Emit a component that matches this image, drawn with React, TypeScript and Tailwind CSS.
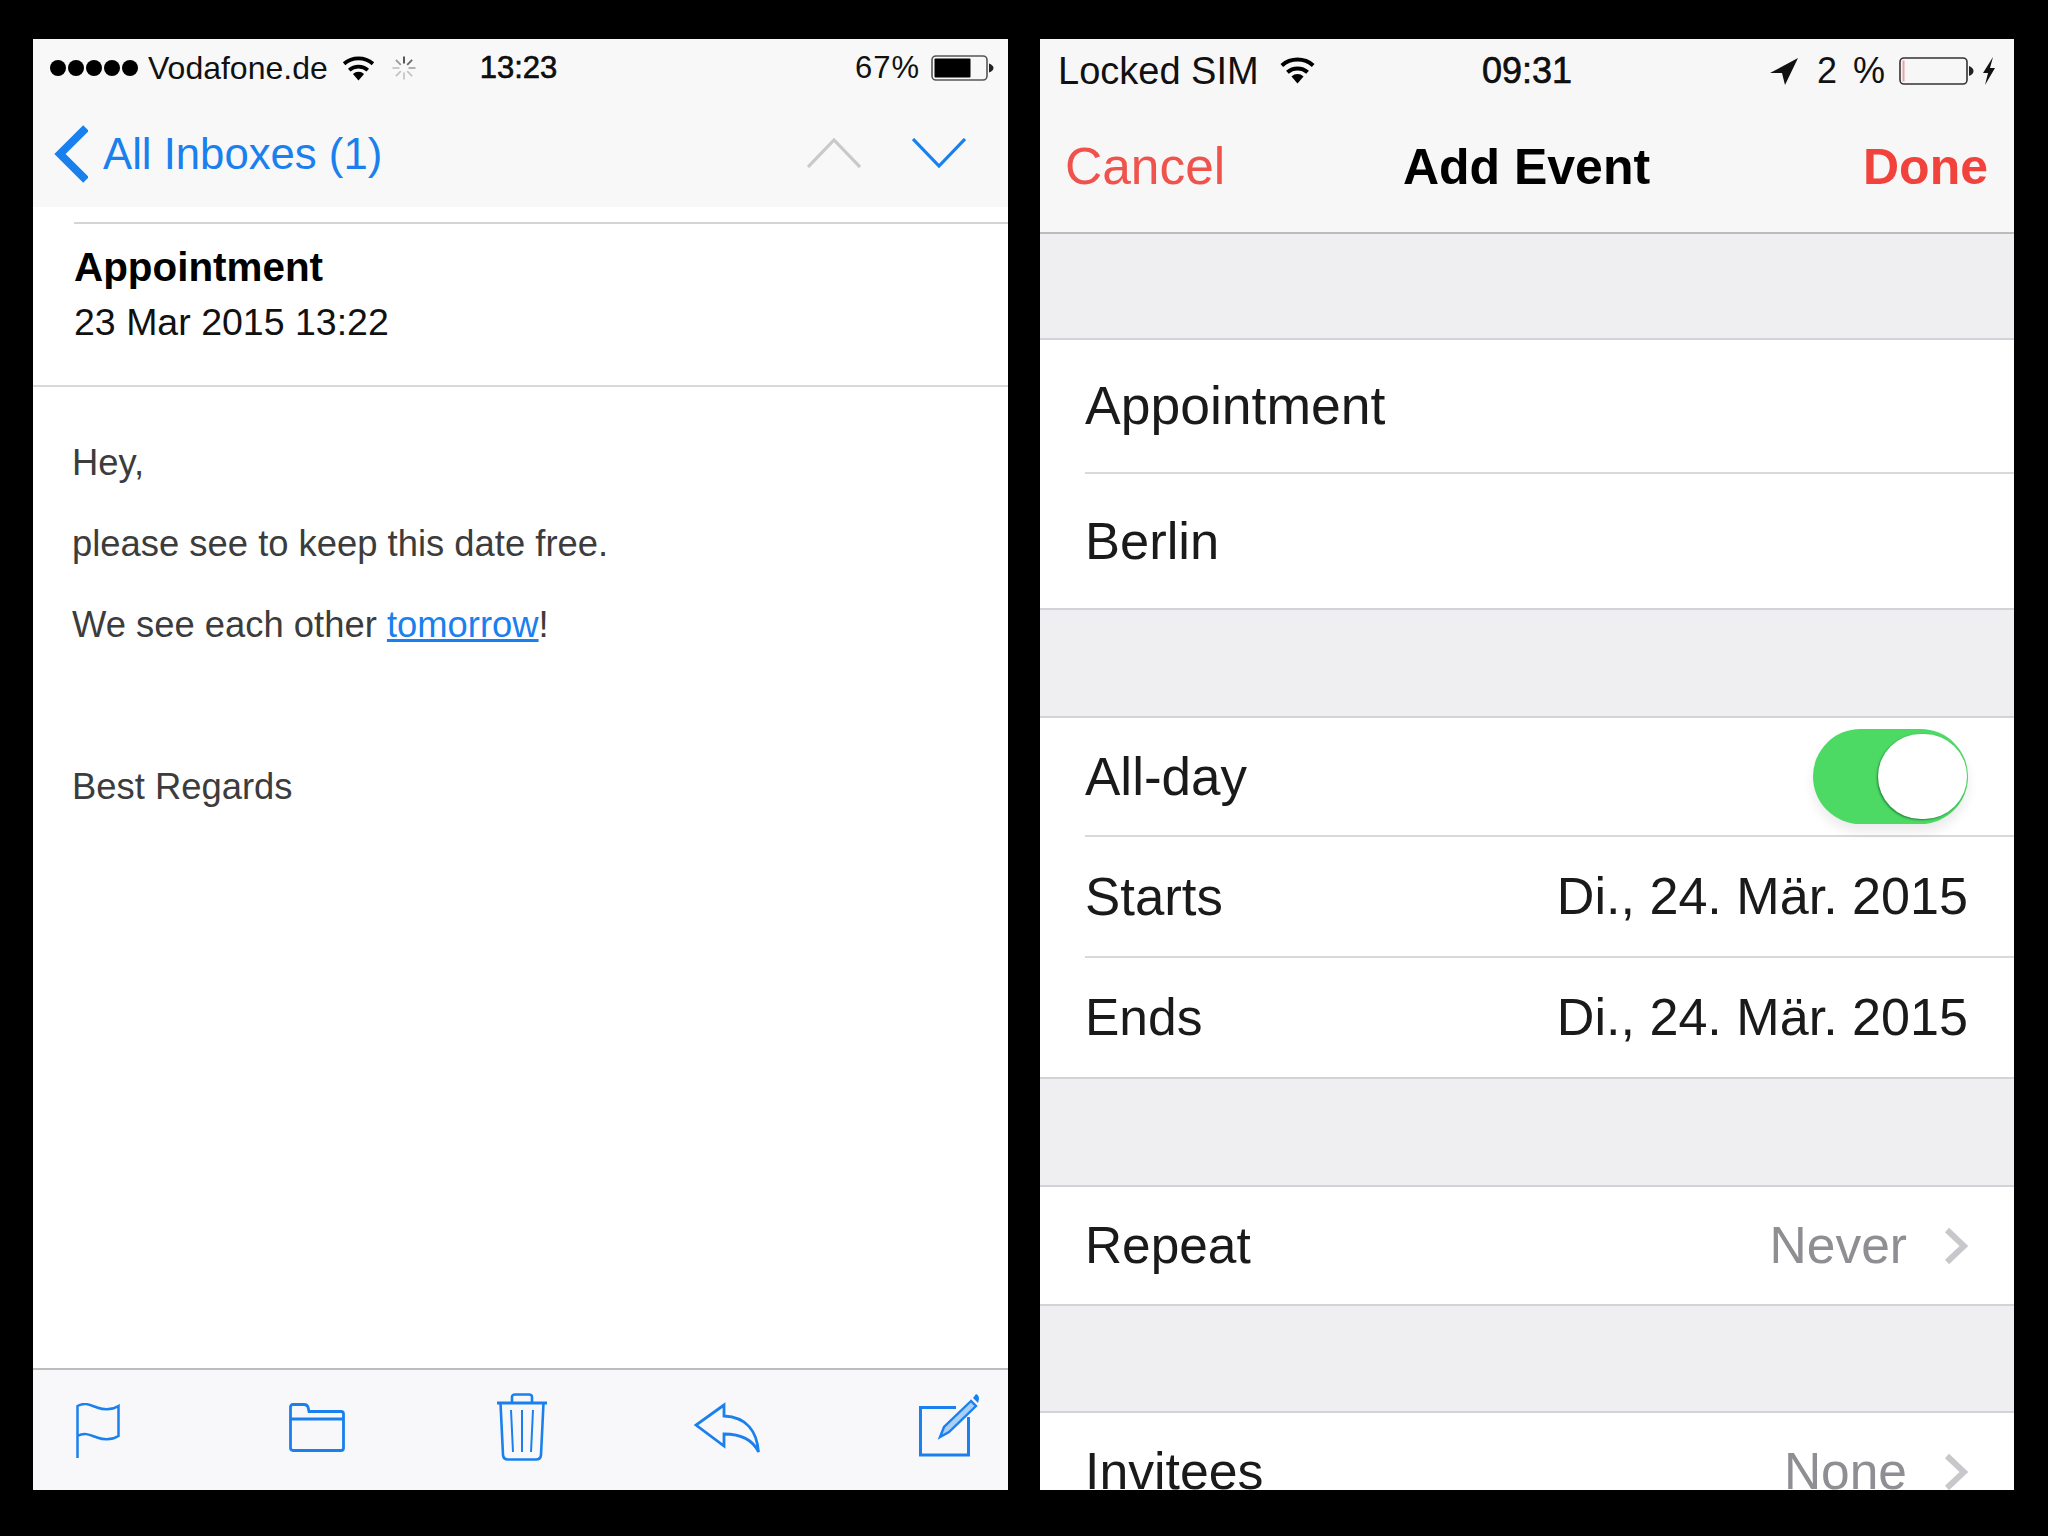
const BLUE = "#1a80ee";

function Wifi({ className }: { className: string }) {
  return (
    <svg viewBox="0 0 32 25" className={className}>
      <path d="M16 24.5 L10.6 18.2 A8.2 8.2 0 0 1 21.4 18.2 Z" fill="#000" />
      <path d="M7 14.6 A13.4 13.4 0 0 1 25 14.6" fill="none" stroke="#000" strokeWidth="3.6" />
      <path d="M2 8.4 A21.4 21.4 0 0 1 30 8.4" fill="none" stroke="#000" strokeWidth="3.6" />
    </svg>
  );
}

function Spinner() {
  const lines = [0, 45, 90, 135, 180, 225, 270, 315];
  const colors = ["#444", "#666", "#aaa", "#c4c4c4", "#c4c4c4", "#c4c4c4", "#c4c4c4", "#999"];
  return (
    <svg viewBox="0 0 26 26" className="w-[26px] h-[26px] ml-[16px]">
      {lines.map((a, i) => (
        <line key={a} x1="13" y1="1.5" x2="13" y2="8.5" stroke={colors[i]} strokeWidth="1.8" transform={`rotate(${a} 13 13)`} />
      ))}
    </svg>
  );
}

function Battery({ level, fill, width }: { level: number; fill: string; width: string }) {
  return (
    <svg viewBox={`0 0 ${level === 2 ? 75 : 63} ${level === 2 ? 28 : 26}`} className={width}>
      {level === 2 ? (
        <>
          <rect x="1" y="1" width="67" height="26" rx="4" fill="none" stroke="#333" strokeWidth="1.6" />
          <rect x="3.5" y="3.5" width="2" height="21" fill={fill} />
          <path d="M70 9 C73 10 74.5 12 74.5 14 C74.5 16 73 18 70 19 Z" fill="#222" />
        </>
      ) : (
        <>
          <rect x="1" y="1" width="55" height="24" rx="4" fill="none" stroke="#555" strokeWidth="1.6" />
          <rect x="3.5" y="3.5" width="36" height="19" rx="1" fill="#000" />
          <path d="M58 8.5 C60.5 9.5 62.5 11 62.5 13 C62.5 15 60.5 16.5 58 17.5 Z" fill="#222" />
        </>
      )}
    </svg>
  );
}

function Flag() {
  return (
    <svg viewBox="0 0 44 56" className="w-[44px] h-[56px] ml-[43px] mt-[2px]" fill="none" stroke={BLUE} strokeWidth="2.5">
      <path d="M1.5 55 V3 C9 -1 14 2 21 4.5 C28 7 36 7 42.5 3 V33 C36 37 28 37 21 34.5 C14 32 9 29 1.5 33" />
    </svg>
  );
}

function Folder() {
  return (
    <svg viewBox="0 0 56 49" className="w-[56px] h-[49px] ml-[169px] -mt-[5px]" fill="none" stroke={BLUE} strokeWidth="2.8">
      <path d="M1.5 4 Q1.5 1.5 4 1.5 H15 Q18 1.5 19 4 L20 8.5 H52 Q54.5 8.5 54.5 11 V45 Q54.5 47.5 52 47.5 H4 Q1.5 47.5 1.5 45 Z" />
      <path d="M1.5 16 H54.5" strokeWidth="3" />
    </svg>
  );
}

function Trash() {
  return (
    <svg viewBox="0 0 50 68" className="w-[50px] h-[68px] ml-[152px] -mt-[6px]" fill="none" stroke={BLUE} strokeWidth="2.6">
      <path d="M0 10 H50" strokeWidth="3" />
      <path d="M15 10 V4 Q15 1.5 18 1.5 H32 Q35 1.5 35 4 V10" />
      <path d="M3.5 10 L6 62 Q6.5 66.5 11 66.5 H39 Q43.5 66.5 44 62 L46.5 10" />
      <path d="M14 17 L16 59 M25 17 V59 M36 17 L34 59" strokeWidth="2" />
    </svg>
  );
}

function Reply() {
  return (
    <svg viewBox="0 0 66 52" className="w-[66px] h-[52px] ml-[147px] -mt-[4px]" fill="none" stroke={BLUE} strokeWidth="2.8">
      <path d="M30 3 L2 23 L30 44 V32 C44 32 58 36 64.5 50 C63 30 53 15 30 14 Z" strokeLinejoin="miter" />
    </svg>
  );
}

function Compose() {
  return (
    <svg viewBox="0 0 60 63" className="w-[60px] h-[63px] ml-[159px] -mt-[10px]" fill="none" stroke={BLUE} strokeWidth="3">
      <path d="M37 13.5 H1.5 V61 H49.5 V23" />
      <path d="M52 7 L25 33 L21 43 L30 38 L57 12 Z" fill={BLUE} fillOpacity="0.35" strokeWidth="2.4" />
      <path d="M54 4 L57 0 Q60 1 60 5 L59 9 Z" fill={BLUE} stroke="none" />
    </svg>
  );
}

function Gray({ h }: { h: string }) {
  return <div className={`${h} bg-[#efeef1]`} />;
}

function Group({ children }: { children: React.ReactNode }) {
  return <div className="bg-white border-y-2 border-[#d3d2d6]">{children}</div>;
}

function Row({ label, labelClass, value, h, divider, chevron, right }: { label: string; labelClass: string; value?: string; h: string; divider?: boolean; chevron?: boolean; right?: React.ReactNode }) {
  return (
    <div className="pl-[45px]">
      <div className={`${h} flex items-center pr-[46px] text-[#1a1a1a] ${divider ? "border-b-2 border-[#d9d8dc]" : ""}`}>
        <span className={labelClass}>{label}</span>
        <span className="flex-1" />
        {value && <span className={chevron ? "text-[51.5px] text-[#8e8e93]" : "text-[52.1px] text-[#1a1a1a]"}>{value}</span>}
        {chevron && (
          <svg viewBox="0 0 24 38" className="w-[24px] h-[38px] ml-[37px]" fill="none" stroke="#c7c7cc" strokeWidth="6">
            <path d="M3 3 L20 19 L3 35" />
          </svg>
        )}
        {right}
      </div>
    </div>
  );
}

export default function App() {
  return (
    <div className="w-[2048px] h-[1536px] bg-black flex pt-[39px] pl-[33px] font-['Liberation_Sans',Arial,sans-serif]">
      {/* Mail */}
      <div className="w-[975px] h-[1451px] bg-white flex flex-col overflow-hidden">
        <div className="bg-[#f8f8f8] h-[168px] shrink-0">
          <div className="h-[56px] pt-[1px] pl-[17px] pr-[14px] grid grid-cols-[1fr_auto_1fr] items-center text-[#111]">
            <div className="flex items-center">
              <div className="flex gap-[2px]">
                {[0, 1, 2, 3, 4].map((i) => (
                  <div key={i} className="w-[16px] h-[16px] rounded-full bg-black" />
                ))}
              </div>
              <span className="text-[32px] leading-none ml-[10px]">Vodafone.de</span>
              <Wifi className="w-[33px] h-[26px] ml-[14px]" />
              <Spinner />
            </div>
            <div className="text-[31px] leading-none [-webkit-text-stroke:0.6px_#000] -ml-[7px]">13:23</div>
            <div className="flex items-center justify-end">
              <span className="text-[31px] leading-none tracking-[1px]">67%</span>
              <Battery level={67} fill="#000" width="w-[63px] h-[26px] ml-[11px]" />
            </div>
          </div>
          <div className="h-[112px] pt-[6px] flex items-center pl-[21px] pr-[42px]">
            <svg viewBox="0 0 34 58" className="w-[34px] h-[58px]" fill="none" stroke={BLUE} strokeWidth="8">
              <path d="M32 3 L6 29 L32 55" />
            </svg>
            <span className="text-[43.7px] leading-none ml-[15px] text-[#1a80ee]">All Inboxes (1)</span>
            <span className="flex-1" />
            <svg viewBox="0 0 54 30" className="w-[54px] h-[30px] -mt-[3px]" fill="none" stroke="#c9c9c9" strokeWidth="3.2">
              <path d="M1 29 L27 2 L53 29" />
            </svg>
            <svg viewBox="0 0 54 30" className="w-[54px] h-[30px] ml-[51px] -mt-[3px]" fill="none" stroke={BLUE} strokeWidth="3.2">
              <path d="M1 1 L27 28 L53 1" />
            </svg>
          </div>
        </div>
        <div className="ml-[41px] mt-[15px] border-t-2 border-[#d5d5d5]" />
        <div className="h-[163px] shrink-0 border-b-2 border-[#d8d8d8] pl-[41px] pt-[17px] text-black">
          <div className="text-[40.4px] leading-[53px] font-bold">Appointment</div>
          <div className="text-[37.5px] leading-[56px] text-[#111]">23 Mar 2015 13:22</div>
        </div>
        <div className="flex-1 pl-[39px] pt-[51px] text-[36.4px] leading-[50px] text-[#3c3c3c]">
          <p>Hey,</p>
          <p className="mt-[31px]">please see to keep this date free.</p>
          <p className="mt-[31px]">
            We see each other <span className="text-[#1a80ee] underline">tomorrow</span>!
          </p>
          <p className="mt-[112px]">Best Regards</p>
        </div>
        <div className="h-[122px] shrink-0 border-t-2 border-[#bdbdbd] bg-[#f8f8fa] flex items-center">
          <Flag />
          <Folder />
          <Trash />
          <Reply />
          <Compose />
        </div>
      </div>

      {/* Calendar */}
      <div className="w-[974px] h-[1451px] ml-[32px] bg-white flex flex-col overflow-hidden">
        <div className="bg-[#f7f7f8] h-[195px] shrink-0 border-b-2 border-[#bcbcbc]">
          <div className="h-[62px] pt-[2px] pl-[18px] pr-[18px] grid grid-cols-[1fr_auto_1fr] items-center text-[#111]">
            <div className="flex items-center">
              <span className="text-[38px] leading-none">Locked SIM</span>
              <Wifi className="w-[37px] h-[28px] ml-[20px] -mt-[3px]" />
            </div>
            <div className="text-[36px] leading-none [-webkit-text-stroke:0.6px_#000]">09:31</div>
            <div className="flex items-center justify-end">
              <svg viewBox="0 0 28 27" className="w-[28px] h-[27px]">
                <path d="M28 0 L0 15 L12 15 L15 27 Z" fill="#111" />
              </svg>
              <span className="text-[36px] leading-none ml-[19px] tracking-[3px]">2 %</span>
              <Battery level={2} fill="#e7a3a8" width="w-[75px] h-[28px] ml-[11px]" />
              <svg viewBox="0 0 14 28" className="w-[14px] h-[28px] ml-[8px]">
                <path d="M11 0 L1 16 H6 L3 28 L13 11 H8 Z" fill="#111" />
              </svg>
            </div>
          </div>
          <div className="h-[131px] flex items-center justify-between pl-[25px] pr-[26px] text-[50px] leading-none">
            <span className="text-[#f0524c] text-[51.5px] w-[200px]">Cancel</span>
            <span className="font-bold text-black">Add Event</span>
            <span className="font-bold text-[#f1423b] w-[200px] text-right">Done</span>
          </div>
        </div>
        <Gray h="h-[104px] shrink-0" />
        <Group>
          <Row label="Appointment" labelClass="text-[53.5px]" h="h-[134px]" divider />
          <Row label="Berlin" labelClass="text-[52.5px]" h="h-[134px]" />
        </Group>
        <Gray h="h-[106px] shrink-0" />
        <Group>
          <Row
            label="All-day"
            labelClass="text-[53px]"
            h="h-[119px]"
            divider
            right={
              <div className="w-[155px] h-[95px] rounded-full bg-[#4cd964] flex items-center justify-end pr-[1px] shadow-[0_8px_12px_rgba(0,0,0,0.08)]">
                <div className="w-[89px] h-[85px] rounded-full bg-white shadow-[-1px_1px_2px_rgba(0,60,20,0.55)]" />
              </div>
            }
          />
          <Row label="Starts" labelClass="text-[52.8px]" value="Di., 24. Mär. 2015" h="h-[121px]" divider />
          <Row label="Ends" labelClass="text-[51.5px]" value="Di., 24. Mär. 2015" h="h-[119px]" />
        </Group>
        <Gray h="h-[106px] shrink-0" />
        <Group>
          <Row label="Repeat" labelClass="text-[51.4px]" value="Never" chevron h="h-[117px]" />
        </Group>
        <Gray h="h-[105px] shrink-0" />
        <div className="bg-white border-t-2 border-[#d3d2d6]">
          <Row label="Invitees" labelClass="text-[51.8px]" value="None" chevron h="h-[118px]" />
        </div>
      </div>
    </div>
  );
}
